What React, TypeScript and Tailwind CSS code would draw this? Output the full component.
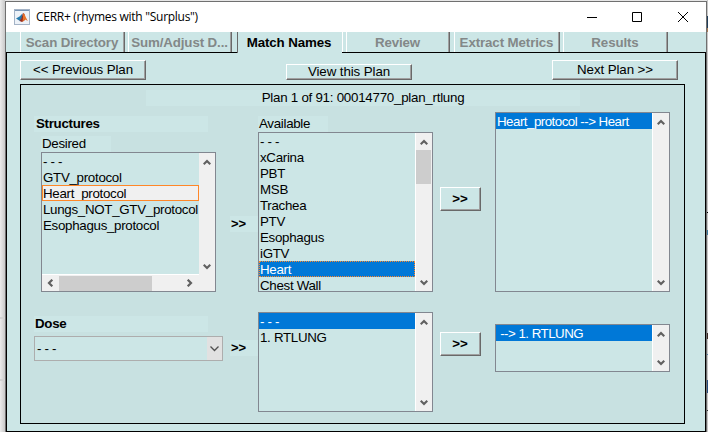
import React from "react";

type Dir = "up" | "down" | "left" | "right";

const arrowPaths: Record<Dir, string> = {
  up: "M.7 6.300 L4 3 L7.300 6.300",
  down: "M.7 1.700 L4 5 L7.300 1.700",
  left: "M6.300 .7 L3 4 L6.300 7.300",
  right: "M1.700 .7 L5 4 L1.700 7.300",
};

function Arrow({ dir }: { dir: Dir }) {
  return (
    <svg width="8" height="8" viewBox="0 0 8 8" className="shrink-0">
      <path d={arrowPaths[dir]} fill="none" stroke="#606060" strokeWidth="2.200" />
    </svg>
  );
}

function VScroll({ thumb, corner }: { thumb?: boolean; corner?: boolean }) {
  return (
    <div
      className={`flex shrink-0 flex-col items-center justify-between bg-[#f0f0f0] ${
        corner ? "w-4 pb-4" : "w-[17px] border-l border-white"
      }`}
    >
      <div className="flex h-[17px] items-center justify-center pt-px">
        <Arrow dir="up" />
      </div>
      {thumb && <div className="mb-auto h-[34px] w-[15px] self-start bg-[#cdcdcd]" />}
      <div className="flex h-[17px] items-center justify-center">
        <Arrow dir="down" />
      </div>
    </div>
  );
}

interface ListProps {
  items: string[];
  size: string;
  selected?: string;
  focused?: string;
  thumb?: boolean;
  hscroll?: boolean;
  dotted?: boolean;
}

function ListBox({ items, size, selected, focused, thumb, hscroll, dotted }: ListProps) {
  return (
    <div className={`flex w-[175px] shrink-0 overflow-hidden border border-[#828790] bg-[#cce6e6] ${size}`}>
      <div className="flex min-w-0 flex-1 flex-col overflow-hidden">
        <div className="min-h-0 flex-1">
          {items.map((item) => {
            const isSelected = item === selected;
            const isFocused = item === focused;
            return (
              <div
                key={item}
                className={`h-4 whitespace-pre border leading-[15px] ${
                  isSelected
                    ? dotted
                      ? "border-dotted border-[#ff8728] bg-[#0078d7] text-white"
                      : "border-[#0078d7] bg-[#0078d7] text-white"
                    : isFocused
                      ? "overflow-hidden border-[#ff8728] bg-[#f0f0f0]"
                      : "border-transparent"
                }`}
              >
                {item}
              </div>
            );
          })}
        </div>
        {hscroll && (
          <div className="flex h-[17px] shrink-0 items-center border-t border-white bg-[#f0f0f0]">
            <div className="flex w-[17px] justify-center pr-px">
              <Arrow dir="left" />
            </div>
            <div className="h-[15px] w-[93px] bg-[#cdcdcd]" />
            <div className="ml-auto flex w-[17px] justify-center pr-px">
              <Arrow dir="right" />
            </div>
          </div>
        )}
      </div>
      <VScroll thumb={thumb} corner={hscroll} />
    </div>
  );
}

function PushButton({ label, size }: { label: string; size: string }) {
  return (
    <div
      className={`flex shrink-0 items-center justify-center whitespace-pre border border-t-white border-l-white border-r-[#696969] border-b-[#696969] bg-[#cce6e6] tracking-[-0.1px] shadow-[inset_-1px_-1px_0_#a0a0a0] ${size}`}
    >
      {label}
    </div>
  );
}

function Tab({ label, size }: { label: string; size: string }) {
  return (
    <div
      className={`flex h-5 shrink-0 items-center justify-center whitespace-pre border-l border-r border-l-white border-r-[#696969] pt-px pr-px text-[#838888] shadow-[inset_-1px_0_0_#a0a0a0] ${size}`}
    >
      {label}
    </div>
  );
}

function Marker({ gap }: { gap: string }) {
  return (
    <div className={`h-4 w-[28px] bg-[#cce6e6] pl-px text-[13px] font-bold leading-4 tracking-normal ${gap}`}>{">>"}</div>
  );
}

export default function App() {
  return (
    <div className="flex h-[432px] w-[708px] overflow-hidden bg-[#e6e6e6] font-['Liberation_Sans',Arial,sans-serif] text-[13.33px] tracking-[-0.3px] text-black">
      <div className="flex w-[5px] shrink-0 flex-col bg-linear-to-r from-[#ececec] to-[#c9c9c9]">
        <div className="mt-[317px] h-0.5 bg-[#d2d2d2]" />
        <div className="mt-[60px] h-0.5 bg-[#d2d2d2]" />
      </div>
      <div className="mt-px flex w-[702px] shrink-0 flex-col border-t border-r border-l border-[#707070] bg-[#cce6e6]">
        <div className="flex h-[30px] shrink-0 items-center bg-white pl-[8px]">
          <svg width="16" height="16" viewBox="0 0 16 16">
            <rect x=".5" y=".5" width="15" height="15" fill="#edf2f8" stroke="#a4b3c6" />
            <path d="M1 1h14v1H1z" fill="#7895b5" />
            <path d="M2 9.500L5.500 7.500 8.500 4.500 8 9 6 12z" fill="#267bad" />
            <path d="M5.500 12L7.500 9 9 4l1.500 1 .5 6-3 2z" fill="#942d22" />
            <path d="M9.200 4c1.800 1 2.800 5.500 4.800 8l-3-1.500-2.500 2.500.5-5z" fill="#e9742a" />
          </svg>
          <span className="ml-[6px] whitespace-pre font-['Open_Sans','Noto_Sans',sans-serif] text-[12px] tracking-[-0.28px]">
            CERR+ (rhymes with "Surplus")
          </span>
          <svg className="ml-auto mr-[17px]" width="102" height="12" viewBox="0 0 102 12" fill="none" stroke="#000">
            <path d="M0 6.500h10M45.500 1.500h9v9h-9zM91 1l10 10M101 1L91 11" />
          </svg>
        </div>
        <div className="flex h-[20px] shrink-0 font-bold tracking-[-0.12px]">
          <Tab label="Scan Directory" size="ml-[14px] w-[105px]" />
          <Tab label="Sum/Adjust D..." size="ml-[3px] w-[104px]" />
          <div className="ml-[5px] h-[21px] w-[106px] shrink-0 border-r border-l border-r-white border-l-[#696969] bg-[#cce6e6] pt-[3px] pr-[2px] text-center leading-4">
            Match Names
          </div>
          <Tab label="Review" size="ml-[3px] w-[104px]" />
          <Tab label="Extract Metrics" size="ml-[4px] w-[106px]" />
          <Tab label="Results" size="ml-[3px] w-[105px]" />
        </div>
        <div className="flex h-px shrink-0 justify-between">
          <div className="w-[231px] bg-black" />
          <div className="w-[364px] bg-black" />
        </div>
        <div className="flex flex-1 flex-col border-r border-b border-l border-black px-[13px]">
          <div className="mt-[7px] flex h-5 w-[658px] shrink-0 items-end justify-between">
            <PushButton label="<< Previous Plan" size="h-5 w-[126px] pb-px" />
            <PushButton label="View this Plan" size="h-4 w-[126px]" />
            <PushButton label="Next Plan >>" size="h-5 w-[126px] pb-px" />
          </div>
          <div className="mt-1 h-[340px] w-[665px] shrink-0 border border-black bg-[#c8e1e1]">
            <div className="mt-[5px] ml-[125px] h-4 w-[434px] bg-[#cce6e6] text-center leading-4 tracking-[-0.25px]">
              Plan 1 of 91: 00014770_plan_rtlung
            </div>
            <div className="flex items-start">
              <div className="ml-[13px] flex w-[189px] shrink-0 flex-col">
                <div className="mt-[10px] h-4 w-[174px] bg-[#cce6e6] pl-[2px] font-bold leading-4">Structures</div>
                <div className="mt-1 ml-[7px] h-4 w-[70px] bg-[#cce6e6] pl-px leading-4">Desired</div>
                <div className="ml-[7px]">
                  <ListBox
                    items={["- - -", "GTV_protocol", "Heart_protocol", "Lungs_NOT_GTV_protocol", "Esophagus_protocol"]}
                    focused="Heart_protocol"
                    size="h-[140px]"
                    hscroll
                  />
                </div>
                <div className="mt-6 h-4 w-[174px] bg-[#cce6e6] pl-px font-bold leading-4">Dose</div>
                <div className="mt-1 flex h-[25px] w-[189px] items-stretch border border-[#adadad] bg-[#cce6e6]">
                  <span className="flex-1 pl-[2px] leading-[23px]">- - -</span>
                  <span className="flex w-[15px] items-center justify-center bg-[#e1e1e1]">
                    <svg width="9" height="6" viewBox="0 0 9 6">
                      <path d="M.5 .5 L4.500 4.500 L8.500 .5" fill="none" stroke="#505050" strokeWidth="1.300" />
                    </svg>
                  </span>
                </div>
              </div>
              <div className="ml-[7px] flex w-[28px] shrink-0 flex-col">
                <Marker gap="mt-[110px]" />
                <Marker gap="mt-[108px]" />
              </div>
              <div className="flex w-[175px] shrink-0 flex-col">
                <div className="mt-[10px] h-4 w-[70px] bg-[#cce6e6] pl-px leading-4">Available</div>
                <ListBox
                  items={["- - -", "xCarina", "PBT", "MSB", "Trachea", "PTV", "Esophagus", "iGTV", "Heart", "Chest Wall"]}
                  selected="Heart"
                  size="h-[160px]"
                  thumb
                  dotted
                />
                <div className="mt-5">
                  <ListBox items={["- - -", "1. RTLUNG"]} selected="- - -" size="h-[100px]" />
                </div>
              </div>
              <div className="ml-[7px] flex w-[41px] shrink-0 flex-col font-bold">
                <PushButton label=">>" size="mt-[81px] h-6 w-[41px] pb-px pr-px" />
                <PushButton label=">>" size="mt-[121px] h-6 w-[41px] pb-px pr-px" />
              </div>
              <div className="ml-[14px] flex shrink-0 flex-col tracking-[-0.52px]">
                <div className="mt-[6px]">
                  <ListBox items={["Heart_protocol --> Heart"]} selected="Heart_protocol --> Heart" size="h-[180px]" />
                </div>
                <div className="mt-8">
                  <ListBox items={[" --> 1. RTLUNG"]} selected=" --> 1. RTLUNG" size="h-12" />
                </div>
              </div>
            </div>
          </div>
        </div>
      </div>
      <div className="flex w-px flex-1 flex-col bg-[#c6c6c6]">
        <div className="mt-[16px] h-[12px] bg-[#203c58]" />
        <div className="h-[4px] bg-[#a67b55]" />
        <div className="mt-[180px] h-px bg-black" />
        <div className="mt-[17px] h-[5px] bg-[#397ba0]" />
        <div className="mt-[98px] h-[6px] bg-[#3b2a26]" />
        <div className="mt-[15px] h-px bg-[#4d83ad]" />
        <div className="mt-[25px] h-[13px] bg-[#254c80]" />
        <div className="mt-[17px] h-px bg-[#333]" />
      </div>
    </div>
  );
}
